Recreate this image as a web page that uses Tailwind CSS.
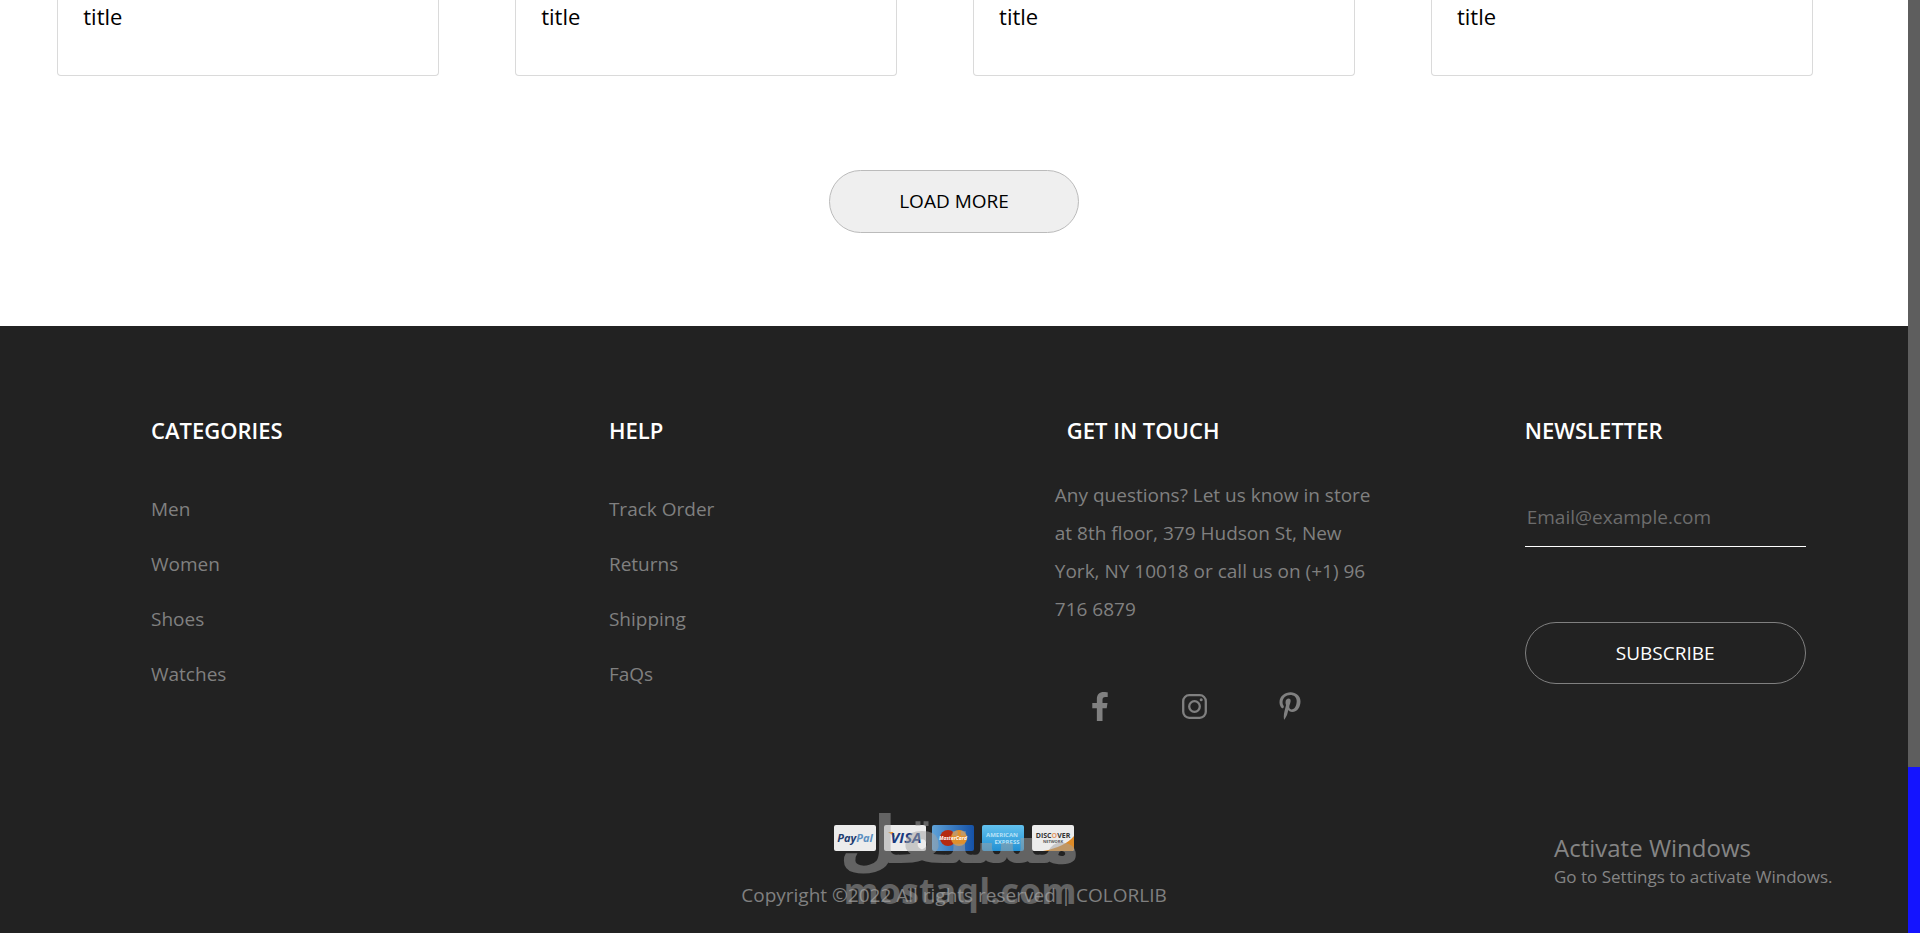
<!DOCTYPE html>
<html lang="en">
<head>
    <meta charset="UTF-8">
    <meta name="viewport" content="width=device-width, initial-scale=1.0">
    <title>Shop</title>
    <script src="https://cdn.jsdelivr.net/npm/@tailwindcss/browser@4"></script>
</head>
<body class="flex min-h-screen bg-white font-['Open_Sans',sans-serif] text-[19px] text-black">
<div class="flex flex-1 flex-col">
    <!-- products -->
    <main>
        <div class="flex">
            <div class="ml-[3%] mr-[4%] h-[76px] w-1/5 rounded-b border border-t-0 border-[#dadada] px-[25px]"><h2 class="text-[22px] leading-8">title</h2></div>
            <div class="mr-[4%] h-[76px] w-1/5 rounded-b border border-t-0 border-[#dadada] px-[25px]"><h2 class="text-[22px] leading-8">title</h2></div>
            <div class="mr-[4%] h-[76px] w-1/5 rounded-b border border-t-0 border-[#dadada] px-[25px]"><h2 class="text-[22px] leading-8">title</h2></div>
            <div class="mr-[4%] h-[76px] w-1/5 rounded-b border border-t-0 border-[#dadada] px-[25px]"><h2 class="text-[22px] leading-8">title</h2></div>
        </div>
        <div class="flex justify-center pt-[94px] pb-[93px]">
            <button type="button" class="h-[63px] w-[250px] rounded-full border border-[#bbb] bg-[#efefef] hover:bg-gray-200">LOAD MORE</button>
        </div>
    </main>

    <!-- footer -->
    <footer class="relative flex-1 bg-[#222] text-[#808080]">
        <div class="flex pt-[88px]">
            <div class="ml-[151px] w-[24%]">
                <h3 class="text-[22px] leading-8 font-semibold text-white">CATEGORIES</h3>
                <ul class="mt-9 leading-[55px]">
                    <li><a href="#" class="hover:text-white">Men</a></li>
                    <li><a href="#" class="hover:text-white">Women</a></li>
                    <li><a href="#" class="hover:text-white">Shoes</a></li>
                    <li><a href="#" class="hover:text-white">Watches</a></li>
                </ul>
            </div>
            <div class="w-[24%]">
                <h3 class="text-[22px] leading-8 font-semibold text-white">HELP</h3>
                <ul class="mt-9 leading-[55px]">
                    <li><a href="#" class="hover:text-white">Track Order</a></li>
                    <li><a href="#" class="hover:text-white">Returns</a></li>
                    <li><a href="#" class="hover:text-white">Shipping</a></li>
                    <li><a href="#" class="hover:text-white">FaQs</a></li>
                </ul>
            </div>
            <div class="w-[24%]">
                <h3 class="text-[22px] leading-8 font-semibold text-white">GET IN TOUCH</h3>
                <p class="-ml-3 mt-[30px] w-[330px] leading-[38px]">Any questions? Let us know in store at 8th floor, 379 Hudson St, New York, NY 10018 or call us on (+1) 96 716 6879</p>
                <div class="mt-16 flex gap-[67px] pl-[19px]">
                    <a href="#" aria-label="Facebook" class="flex h-7 w-7 items-center justify-center hover:text-white">
                        <svg class="h-[29px] w-[18px]" viewBox="0 0 320 512" fill="currentColor"><path d="M279.14 288l14.22-92.66h-88.91v-60.13c0-25.35 12.42-50.06 52.24-50.06h40.42V6.26S260.43 0 225.36 0c-73.22 0-121.08 44.38-121.08 124.72v70.62H22.89V288h81.39v224h100.17V288z"/></svg>
                    </a>
                    <a href="#" aria-label="Instagram" class="flex h-7 w-7 items-center justify-center hover:text-white">
                        <svg class="h-[25px] w-[25px]" viewBox="0 0 25 25" fill="none" stroke="currentColor" stroke-width="2.3"><rect x="1.2" y="1.2" width="22.6" height="22.6" rx="6"/><circle cx="12.5" cy="12.5" r="5.3"/><circle cx="19.2" cy="5.8" r="1.5" fill="currentColor" stroke="none"/></svg>
                    </a>
                    <a href="#" aria-label="Pinterest" class="flex h-7 w-7 items-center justify-center hover:text-white">
                        <svg class="h-7 w-[22px]" viewBox="0 0 384 512" fill="currentColor"><path d="M204 6.500C101.400 6.500 0 74.900 0 185.600 0 256 39.600 296 63.600 296c9.900 0 15.600-27.600 15.600-35.400 0-9.300-23.700-29.100-23.700-67.800 0-80.400 61.200-137.400 140.400-137.400 68.100 0 118.500 38.700 118.500 109.800 0 53.100-21.300 152.700-90.300 152.700-24.900 0-46.200-18-46.200-43.800 0-37.800 26.400-74.400 26.400-113.400 0-66.200-93.900-54.200-93.900 25.800 0 16.800 2.100 35.400 9.600 50.700-13.800 59.400-42 147.900-42 209.100 0 18.900 2.700 37.500 4.500 56.400 3.400 3.800 1.700 3.400 6.900 1.500 50.400-69 48.600-82.500 71.400-172.800 12.300 23.400 44.100 36 69.300 36 106.200 0 153.900-103.500 153.900-196.800C384 71.300 298.200 6.500 204 6.500z"/></svg>
                    </a>
                </div>
            </div>
            <div class="w-[281px]">
                <h3 class="text-[22px] leading-8 font-semibold text-white">NEWSLETTER</h3>
                <form>
                    <input type="email" aria-label="Email" placeholder="Email@example.com" class="mt-[42px] h-[59px] w-full border-b border-white bg-transparent px-[2px] placeholder:text-[#6c6c6c]">
                    <button type="submit" class="mt-[75px] h-[62px] w-full rounded-full border border-[#808080] text-white">SUBSCRIBE</button>
                </form>
            </div>
        </div>

        <div class="relative mt-[105px] flex flex-col items-center">
            <svg class="h-[26px] w-[240px]" viewBox="0 0 240 26">
                <defs>
                    <linearGradient id="mc" x1="0" x2="1"><stop offset="0" stop-color="#5fa3d9"/><stop offset="1" stop-color="#1552a8"/></linearGradient>
                    <linearGradient id="amex" x1="0" x2="0" y1="0" y2="1"><stop offset="0" stop-color="#62c1ee"/><stop offset="1" stop-color="#2290d3"/></linearGradient>
                </defs>
                <rect x="0" width="42" height="26" rx="2" fill="#ececec"/>
                <text x="21" y="17" text-anchor="middle" font-size="11" font-weight="700" font-style="italic" fill="#1d3c70">Pay<tspan fill="#5b8fc0">Pal</tspan></text>
                <rect x="50" width="42" height="26" rx="2" fill="#ececec"/>
                <path d="M54 7h5l2 5z" fill="#eb9a2c"/>
                <text x="72" y="18" text-anchor="middle" font-size="15" font-weight="700" font-style="italic" fill="#18397f">VISA</text>
                <rect x="98" width="42" height="26" rx="2" fill="url(#mc)"/>
                <circle cx="114" cy="13" r="8" fill="#b52a12"/>
                <circle cx="125" cy="13" r="8" fill="#e0902d"/>
                <text x="119" y="15" text-anchor="middle" font-size="5" font-weight="700" font-style="italic" fill="#fff">MasterCard</text>
                <rect x="148" width="42" height="26" rx="2" fill="url(#amex)"/>
                <text x="168" y="12" text-anchor="middle" font-size="6" font-weight="700" fill="#b9e2f7">AMERICAN</text>
                <text x="173" y="19" text-anchor="middle" font-size="6" font-weight="700" fill="#b9e2f7">EXPRESS</text>
                <rect x="198" width="42" height="26" rx="2" fill="#ececec"/>
                <path d="M240 11v13q0 2-2 2h-29q22-4 31-15z" fill="#dd8b28"/>
                <text x="219" y="13" text-anchor="middle" font-size="7" font-weight="700" fill="#333">DISC<tspan fill="#e29a6a">O</tspan>VER</text>
                <text x="219" y="18" text-anchor="middle" font-size="4" font-weight="700" fill="#555">NETWORK</text>
            </svg>
            <p class="mt-[30px] leading-7">Copyright ©2022 All rights reserved | COLORLIB</p>

            <!-- watermark -->
            <svg class="pointer-events-none absolute -top-5 left-1/2 h-[110px] w-[240px] -translate-x-[114px] overflow-visible" viewBox="0 0 240 110" fill="#a3a3a3" opacity="0.5">
                <text x="120" y="58" text-anchor="middle" direction="rtl" font-family="DejaVu Sans" font-weight="700" font-size="66">مستقل</text>
                <text x="120" y="99" text-anchor="middle" font-weight="700" font-size="36">mostaql.com</text>
            </svg>
        </div>

        <div class="absolute right-[71px] bottom-[43px] w-[283px] whitespace-nowrap text-[#858585]">
            <p class="text-2xl leading-[32px]">Activate Windows</p>
            <p class="text-[17px] leading-[26px]">Go to Settings to activate Windows.</p>
        </div>
    </footer>
</div>

<!-- scrollbar -->
<div class="flex w-3 flex-col justify-end bg-[#5e5e5e]">
    <div class="h-[166px] bg-[#1414ff]"></div>
</div>
</body>
</html>
